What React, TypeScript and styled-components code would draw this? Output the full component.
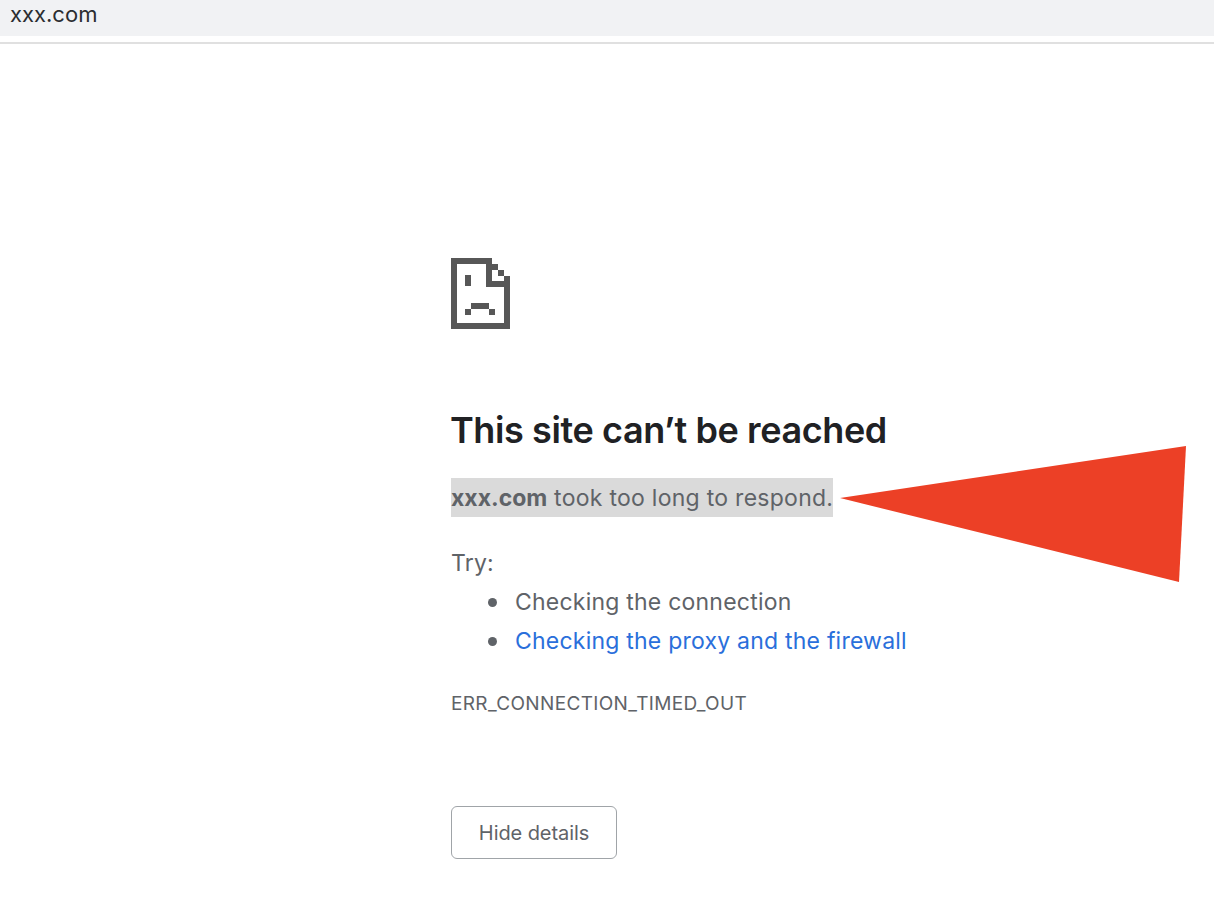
import React from 'react'
import styled, { createGlobalStyle } from 'styled-components'

const GlobalStyle = createGlobalStyle`
    html, body {
        margin: 0;
        padding: 0;
        background: #fff;
    }
    body {
        font-family: "Inter", "Liberation Sans", sans-serif;
    }
`

const Page = styled.div`
    position: relative;
    width: 1214px;
    height: 900px;
    overflow: hidden;
    background: #fff;
`

const AddressBar = styled.div`
    height: 36px;
    background: #f1f2f4;
    padding-left: 10px;
    font-size: 22px;
    line-height: 28px;
    color: #2b2d30;
`

const Divider = styled.div`
    height: 2px;
    margin-top: 6px;
    background: #e0e0e0;
`

const Content = styled.main`
    display: flex;
    flex-direction: column;
    align-items: flex-start;
    padding: 214px 0 0 451px;
    color: #5f6368;
`

const SadFile = styled.svg`
    display: block;
    width: 60px;
    height: 72px;
    color: #575757;
`

const Title = styled.h1`
    margin: 78px 0 0 -1px;
    font-size: 36px;
    line-height: 44px;
    font-weight: 600;
    letter-spacing: -0.4px;
    color: #202124;
`

const Summary = styled.p`
    margin: 26px 0 0;
    height: 39px;
    line-height: 41px;
    font-size: 23px;
    background: #dadada;
    letter-spacing: 0.27px;
    color: #5f6368;
    white-space: nowrap;

    strong {
        font-weight: 700;
        letter-spacing: 0;
    }
`

const TryLabel = styled.div`
    margin-top: 27px;
    font-size: 23px;
    line-height: 39px;
    letter-spacing: 0.2px;
`

const Suggestions = styled.ul`
    margin: 0;
    padding: 0 0 0 64px;
    list-style: none;
    font-size: 23px;
    line-height: 39px;
    letter-spacing: 0.22px;
`

const Suggestion = styled.li<{ $link?: boolean }>`
    position: relative;
    color: ${p => (p.$link ? '#2a6fdb' : '#5f6368')};

    &::before {
        content: '';
        position: absolute;
        left: -27px;
        top: 15px;
        width: 9px;
        height: 9px;
        border-radius: 50%;
        background: #5f6368;
    }
`

const ErrorCode = styled.div`
    margin-top: 29px;
    font-size: 19px;
    line-height: 28px;
    letter-spacing: 0.35px;
`

const DetailsButton = styled.button`
    margin-top: 88px;
    box-sizing: border-box;
    width: 166px;
    height: 53px;
    border: 1.5px solid #a0a4a8;
    border-radius: 6px;
    background: #fff;
    font-family: inherit;
    font-size: 20px;
    color: #5f6368;
    letter-spacing: -0.08px;
    padding: 0;
`

const Arrow = styled.svg`
    position: absolute;
    left: 0;
    top: 0;
    width: 1214px;
    height: 900px;
    pointer-events: none;
`

// x, y, w, h on the 451/258 origin
const iconPixels = [
    [0, 0, 41, 6],
    [0, 0, 6, 71],
    [0, 65, 59, 6],
    [53, 18, 6, 53],
    [35, 6, 6, 23],
    [35, 23, 18, 6],
    [41, 6, 6, 6],
    [47, 12, 6, 6],
    [14, 17, 6, 11],
    [20, 45, 18, 6],
    [14, 51, 6, 6],
    [38, 51, 6, 6],
]

const App = () => {
    return (
        <Page>
            <GlobalStyle />
            <AddressBar>xxx.com</AddressBar>
            <Divider />
            <Content>
                <SadFile viewBox="0 0 60 72">
                    {iconPixels.map(([x, y, w, h]) => (
                        <rect key={`${x}-${y}`} x={x} y={y} width={w} height={h} fill="currentColor" />
                    ))}
                </SadFile>
                <Title>This site can’t be reached</Title>
                <Summary><strong>xxx.com</strong> took too long to respond.</Summary>
                <TryLabel>Try:</TryLabel>
                <Suggestions>
                    <Suggestion>Checking the connection</Suggestion>
                    <Suggestion $link>Checking the proxy and the firewall</Suggestion>
                </Suggestions>
                <ErrorCode>ERR_CONNECTION_TIMED_OUT</ErrorCode>
                <DetailsButton>Hide details</DetailsButton>
            </Content>
            <Arrow viewBox="0 0 1214 900">
                <polygon points="840,498 1186,446 1179,582" fill="#ec4026" />
            </Arrow>
        </Page>
    )
}

export default App
